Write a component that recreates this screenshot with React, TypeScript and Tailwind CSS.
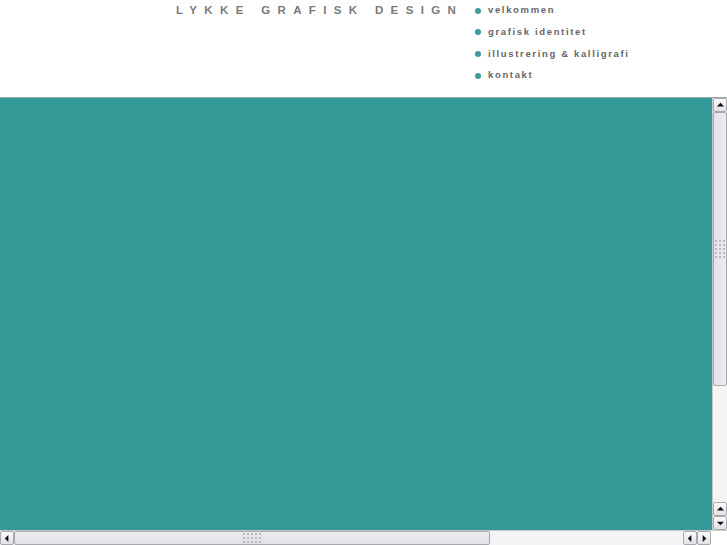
import React from "react";

const Grip = ({ rows, cols }: { rows: number; cols: number }) => (
  <div className="grid gap-[2px]" style={{ gridTemplateColumns: `repeat(${cols}, 2px)` }}>
    {Array.from({ length: rows * cols }).map((_, i) => (
      <div key={i} className="w-[2px] h-[2px] bg-[#b8b8bc]" />
    ))}
  </div>
);

const ArrowBtn = ({ dir, className = "" }: { dir: "up" | "down" | "left" | "right"; className?: string }) => {
  const pts =
    dir === "up" ? "1,6 5,2 9,6" : dir === "down" ? "1,3 5,7 9,3" : dir === "left" ? "6,1 2,5 6,9" : "3,1 7,5 3,9";
  return (
    <div
      className={`w-[14px] h-[14px] flex items-center justify-center rounded-[2px] border border-[#a9a9ad] bg-gradient-to-b from-[#fbfbfc] to-[#e2e2e6] ${className}`}
    >
      <svg width="9" height="9" viewBox="0 0 10 10">
        <polygon points={pts} fill="#111" />
      </svg>
    </div>
  );
};

export default function App() {
  const nav = ["velkommen", "grafisk identitet", "illustrering & kalligrafi", "kontakt"];
  return (
    <div className="w-[727px] h-[545px] flex flex-col bg-white overflow-hidden" style={{ fontFamily: '"Liberation Sans", Arial, sans-serif' }}>
      <div className="h-[97px] flex shrink-0">
        <div className="pl-[176px] pt-[4px] w-[474px] shrink-0">
          <div className="text-[11.5px] font-bold text-[#7a7a7a] tracking-[7.35px] leading-[13px] whitespace-nowrap">
            LYKKE GRAFISK DESIGN
          </div>
        </div>
        <div className="flex flex-col pt-[4px] gap-[8.7px]">
          {nav.map((n) => (
            <div key={n} className="flex items-center h-[13px]">
              <span className="w-[6px] h-[6px] rounded-full bg-[#3c9c9a] ml-[1px] mr-[7px]" />
              <span className="text-[9.5px] font-bold text-[#666] tracking-[1.65px] whitespace-nowrap">{n}</span>
            </div>
          ))}
        </div>
      </div>
      <div className="flex flex-1 border-t border-[#9aa]">
        <div className="flex-1 bg-[#339a98]" />
        <div className="w-[15px] flex flex-col bg-[#f4f4f6] border-l border-[#c8c8cc]">
          <ArrowBtn dir="up" />
          <div className="h-[274px] bg-gradient-to-r from-[#e4e4e8] to-[#ececf0] border border-[#a9a9ad] rounded-[2px] flex items-center justify-center">
            <Grip rows={5} cols={3} />
          </div>
          <div className="flex-1" />
          <ArrowBtn dir="up" />
          <ArrowBtn dir="down" />
        </div>
      </div>
      <div className="h-[15px] flex shrink-0 bg-[#f4f4f6] border-t border-[#c8c8cc]">
        <ArrowBtn dir="left" />
        <div className="w-[476px] bg-gradient-to-b from-[#ececf0] to-[#e2e2e6] border border-[#a9a9ad] rounded-[2px] flex items-center justify-center">
          <Grip rows={3} cols={5} />
        </div>
        <div className="flex-1" />
        <ArrowBtn dir="left" />
        <ArrowBtn dir="right" />
        <div className="w-[16px] bg-white" />
      </div>
    </div>
  );
}
